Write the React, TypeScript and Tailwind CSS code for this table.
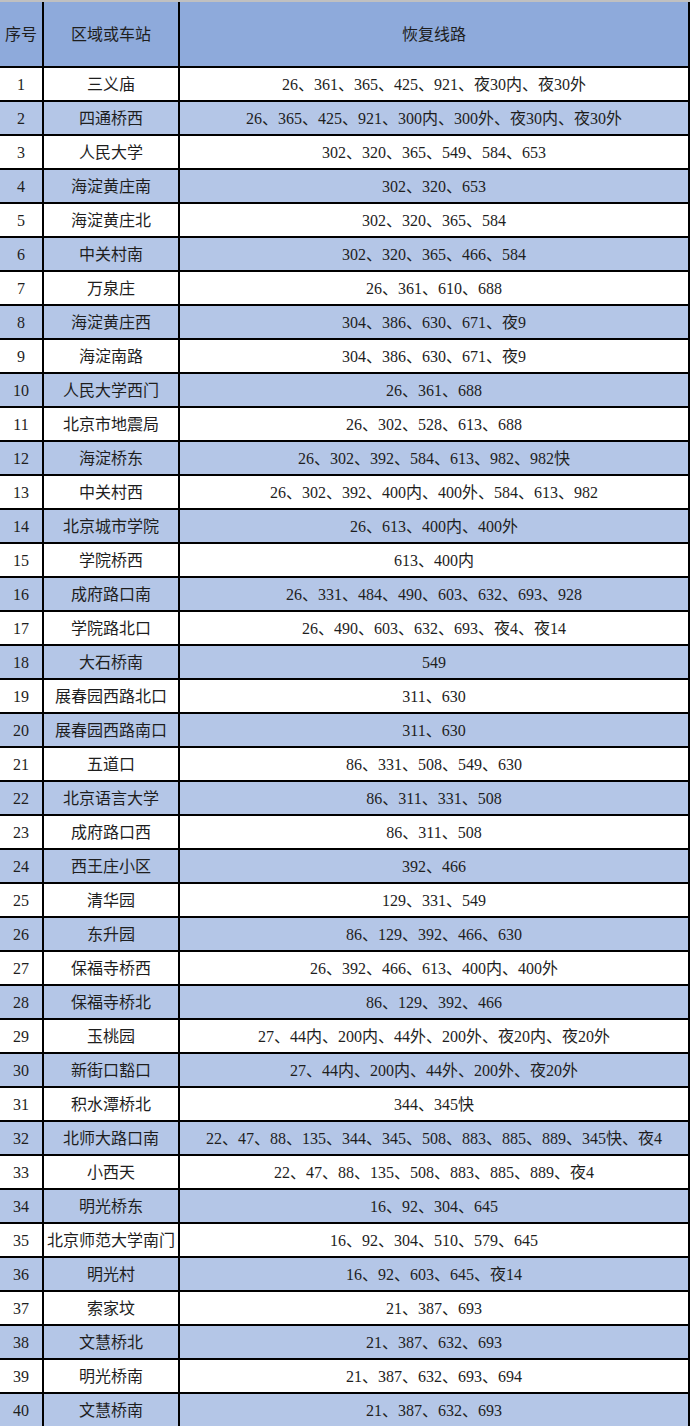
import React from "react";

const rows: [string, string][] = [
  ["三义庙", "26、361、365、425、921、夜30内、夜30外"],
  ["四通桥西", "26、365、425、921、300内、300外、夜30内、夜30外"],
  ["人民大学", "302、320、365、549、584、653"],
  ["海淀黄庄南", "302、320、653"],
  ["海淀黄庄北", "302、320、365、584"],
  ["中关村南", "302、320、365、466、584"],
  ["万泉庄", "26、361、610、688"],
  ["海淀黄庄西", "304、386、630、671、夜9"],
  ["海淀南路", "304、386、630、671、夜9"],
  ["人民大学西门", "26、361、688"],
  ["北京市地震局", "26、302、528、613、688"],
  ["海淀桥东", "26、302、392、584、613、982、982快"],
  ["中关村西", "26、302、392、400内、400外、584、613、982"],
  ["北京城市学院", "26、613、400内、400外"],
  ["学院桥西", "613、400内"],
  ["成府路口南", "26、331、484、490、603、632、693、928"],
  ["学院路北口", "26、490、603、632、693、夜4、夜14"],
  ["大石桥南", "549"],
  ["展春园西路北口", "311、630"],
  ["展春园西路南口", "311、630"],
  ["五道口", "86、331、508、549、630"],
  ["北京语言大学", "86、311、331、508"],
  ["成府路口西", "86、311、508"],
  ["西王庄小区", "392、466"],
  ["清华园", "129、331、549"],
  ["东升园", "86、129、392、466、630"],
  ["保福寺桥西", "26、392、466、613、400内、400外"],
  ["保福寺桥北", "86、129、392、466"],
  ["玉桃园", "27、44内、200内、44外、200外、夜20内、夜20外"],
  ["新街口豁口", "27、44内、200内、44外、200外、夜20外"],
  ["积水潭桥北", "344、345快"],
  ["北师大路口南", "22、47、88、135、344、345、508、883、885、889、345快、夜4"],
  ["小西天", "22、47、88、135、508、883、885、889、夜4"],
  ["明光桥东", "16、92、304、645"],
  ["北京师范大学南门", "16、92、304、510、579、645"],
  ["明光村", "16、92、603、645、夜14"],
  ["索家坟", "21、387、693"],
  ["文慧桥北", "21、387、632、693"],
  ["明光桥南", "21、387、632、693、694"],
  ["文慧桥南", "21、387、632、693"],
];

export default function App() {
  return (
    <div className="w-[690px] h-[1426px] overflow-hidden bg-white font-['Liberation_Serif','Noto_Sans_CJK_SC',serif] text-[16px] text-[#1e1e1e]">
      <div className="border-t-2 border-[#c0c0c0]">
        <div className="flex h-[66px] border-b-2 border-black bg-[#8eaadb]">
          <div className="w-[44px] shrink-0 border-r-2 border-black flex items-center justify-center pt-[2px]">序号</div>
          <div className="w-[136px] shrink-0 border-r-2 border-black flex items-center justify-center pt-[2px]">区域或车站</div>
          <div className="flex-1 border-r-2 border-black flex items-center justify-center pt-[2px]">恢复线路</div>
        </div>
        {rows.map(([name, routes], i) => (
          <div
            key={i}
            className={`flex h-[34px] border-b-2 border-black ${i % 2 === 1 ? "bg-[#b4c6e7]" : "bg-white"}`}
          >
            <div className="w-[44px] shrink-0 border-r-2 border-black flex items-center justify-center pt-[2px]">{i + 1}</div>
            <div className="w-[136px] shrink-0 border-r-2 border-black flex items-center justify-center whitespace-nowrap pt-[2px]">{name}</div>
            <div className="flex-1 border-r-2 border-black flex items-center justify-center whitespace-nowrap pt-[2px]">{routes}</div>
          </div>
        ))}
      </div>
    </div>
  );
}
